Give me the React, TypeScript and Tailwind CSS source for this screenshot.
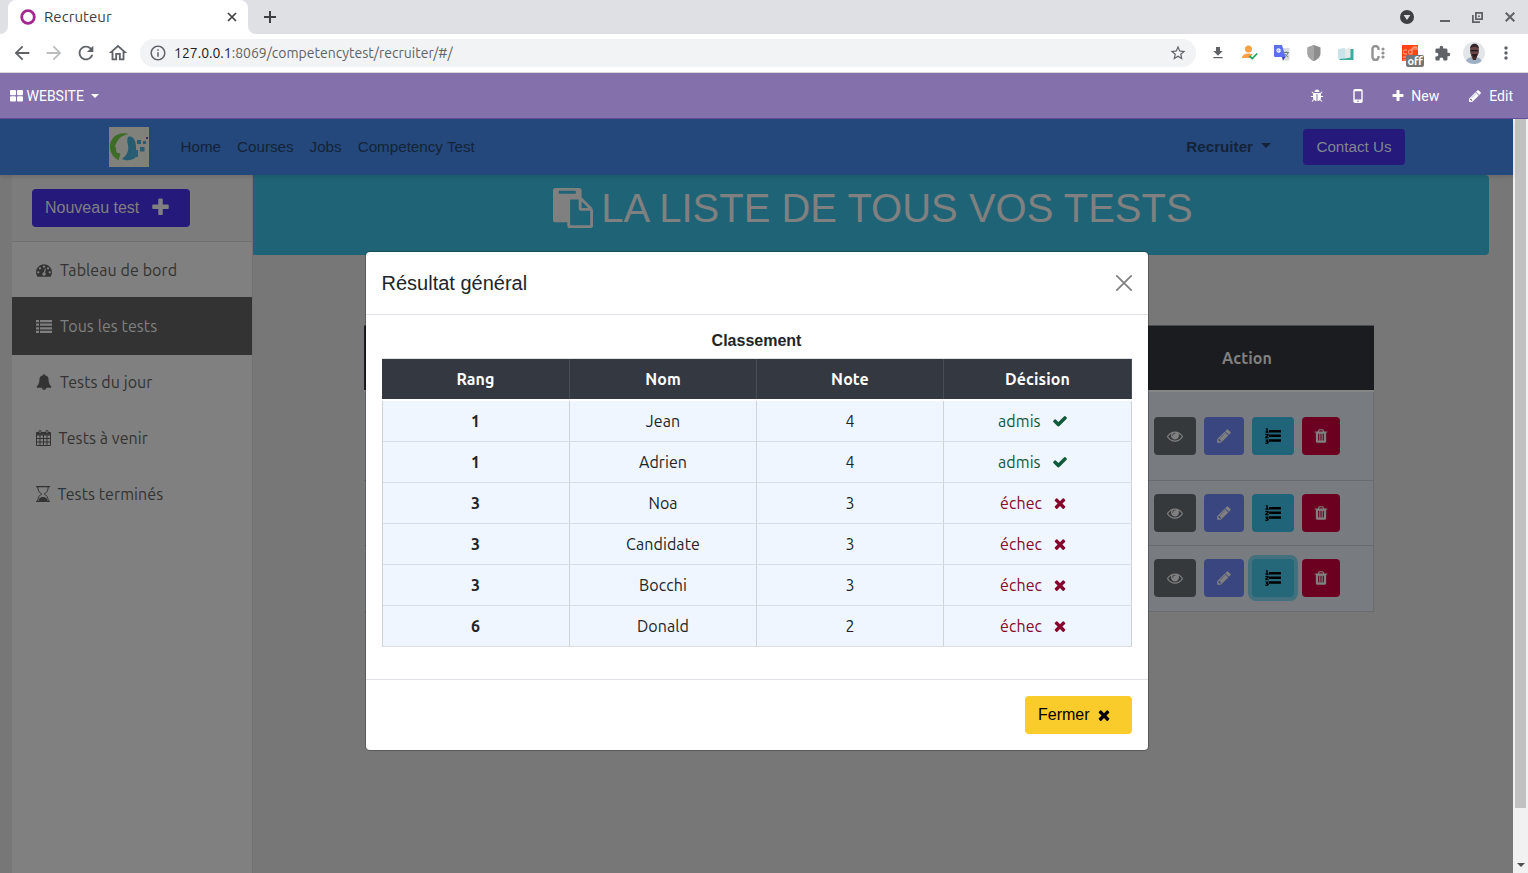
import React from "react";
import { FaListOl } from "react-icons/fa";
import { MdExtension, MdStarBorder, MdOutlineInfo, MdArrowBack, MdArrowForward, MdRefresh, MdOutlineHome, MdFileDownload, MdMoreVert } from "react-icons/md";

const glyphs = {
  eye: "M1664 960q-152-236-381-353 61 104 61 225 0 185-131.5 316.5t-316.5 131.5-316.5-131.5-131.5-316.5q0-121 61-225-229 117-381 353 133 205 333.5 326.5t434.5 121.5 434.5-121.5 333.5-326.5zm-720-384q0-20-14-34t-34-14q-125 0-214.5 89.5t-89.5 214.5q0 20 14 34t34 14 34-14 14-34q0-86 61-147t147-61q20 0 34-14t14-34zm848 384q0 34-20 69-140 230-376.5 368.5t-499.5 138.500-499.5-139-376.5-368q-20-35-20-69t20-69q140-229 376.5-368t499.5-139 499.5 139 376.5 368q20 35 20 69z",
  pencil: "M491 1536l91-91-235-235-91 91v107h128v128h107zm523-928q0-22-22-22-10 0-17 7l-542 542q-7 7-7 17 0 22 22 22 10 0 17-7l542-542q7-7 7-17zm-54-192l416 416-832 832h-416v-416zm683 96q0 53-37 90l-166 166-416-416 166-165q36-38 90-38 53 0 91 38l235 234q37 39 37 91z",
  check: "M1671 566q0 40-28 68l-724 724-136 136q-28 28-68 28t-68-28l-136-136-362-362q-28-28-28-68t28-68l136-136q28-28 68-28t68 28l294 295 656-657q28-28 68-28t68 28l136 136q28 28 28 68z",
  times: "M1490 1322q0 40-28 68l-136 136q-28 28-68 28t-68-28l-294-294-294 294q-28 28-68 28t-68-28l-136-136q-28-28-28-68t28-68l294-294-294-294q-28-28-28-68t28-68l136-136q28-28 68-28t68 28l294 294 294-294q28-28 68-28t68 28l136 136q28 28 28 68t-28 68l-294 294 294 294q28 28 28 68z",
  plus: "M1600 736v192q0 40-28 68t-68 28h-416v416q0 40-28 68t-68 28h-192q-40 0-68-28t-28-68v-416h-416q-40 0-68-28t-28-68v-192q0-40 28-68t68-28h416v-416q0-40 28-68t68-28h192q40 0 68 28t28 68v416h416q40 0 68 28t28 68z",
  trash: "M704 1376v-704q0-14-9-23t-23-9h-64q-14 0-23 9t-9 23v704q0 14 9 23t23 9h64q14 0 23-9t9-23zm256 0v-704q0-14-9-23t-23-9h-64q-14 0-23 9t-9 23v704q0 14 9 23t23 9h64q14 0 23-9t9-23zm256 0v-704q0-14-9-23t-23-9h-64q-14 0-23 9t-9 23v704q0 14 9 23t23 9h64q14 0 23-9t9-23zm-544-992h448l-48-117q-7-9-17-11h-317q-10 2-17 11zm928 32v64q0 14-9 23t-23 9h-96v948q0 83-47 143.500t-113 60.500h-832q-66 0-113-58.500t-47-141.500v-952h-96q-14 0-23-9t-9-23v-64q0-14 9-23t23-9h309l70-167q15-37 54-63t79-26h320q40 0 79 26t54 63l70 167h309q14 0 23 9t9 23z",
  bell: "M912 1696q0-16-16-16-59 0-101.500-42.500t-42.500-101.500q0-16-16-16t-16 16q0 73 51.500 124.500t124.500 51.500q16 0 16-16zm816-288q0 52-38 90t-90 38h-448q0 106-75 181t-181 75-181-75-75-181h-448q-52 0-90-38t-38-90q50-42 91-88t85-119.500 74.500-158.500 50-206 19.500-260q0-152 117-282.500t307-158.500q-8-19-8-39 0-40 28-68t68-28 68 28 28 68q0 20-8 39 190 28 307 158.500t117 282.500q0 139 19.500 260t50 206 74.500 158.500 85 119.500 91 88z",
  gauge: "M384 1152q0-53-37.500-90.500t-90.500-37.500-90.500 37.500-37.500 90.500 37.500 90.500 90.500 37.500 90.500-37.500 37.500-90.500zm192-448q0-53-37.500-90.500t-90.500-37.500-90.500 37.500-37.500 90.500 37.500 90.500 90.500 37.500 90.500-37.500 37.500-90.500zm428 481l101-382q6-26-7.500-48.500t-38.500-29.500-48 6.500-30 39.500l-101 382q-60 5-107 43.500t-63 98.500q-20 77 20 146t117 89 146-20 89-117q16-60-6-117t-72-91zm660-33q0-53-37.500-90.500t-90.500-37.500-90.500 37.500-37.500 90.500 37.500 90.500 90.500 37.500 90.500-37.500 37.500-90.500zm-640-640q0-53-37.500-90.500t-90.500-37.500-90.500 37.500-37.500 90.500 37.500 90.500 90.500 37.500 90.500-37.500 37.500-90.500zm448 192q0-53-37.500-90.500t-90.500-37.500-90.500 37.500-37.500 90.500 37.500 90.500 90.500 37.500 90.500-37.500 37.500-90.500zm320 448q0 261-141 483-19 29-54 29h-1402q-35 0-54-29-141-221-141-483 0-182 71-348t191-286 286-191 348-71 348 71 286 191 191 286 71 348z",
  paste: "M768 1664h896v-640h-416q-40 0-68-28t-28-68v-416h-384v1152zm256-1440v-64q0-13-9.500-22.500t-22.500-9.500h-704q-13 0-22.500 9.500t-9.500 22.500v64q0 13 9.500 22.500t22.500 9.500h704q13 0 22.500-9.500t9.500-22.500zm256 672h299l-299-299v299zm512 128v672q0 40-28 68t-68 28h-960q-40 0-68-28t-28-68v-160h-544q-40 0-68-28t-28-68v-1344q0-40 28-68t68-28h1088q40 0 68 28t28 68v328q21 13 36 28l408 408q28 28 48 76t20 88z",
  bug: "M1696 960q0 26-19 45t-45 19h-224q0 171-67 290l208 209q19 19 19 45t-19 45q-18 19-45 19t-45-19l-198-197q-5 5-15 13t-42 28.500-65 36.500-82 29-97 13v-896h-128v896q-51 0-101.500-13.500t-87-33-66-39-43.500-32.500l-15-14-183 207q-20 21-48 21-24 0-43-16-19-18-20.500-44.500t15.500-46.500l202-227q-58-114-58-274h-224q-26 0-45-19t-19-45 19-45 45-19h224v-294l-173-173q-19-19-19-45t19-45 45-19 45 19l173 173h844l173-173q19-19 45-19t45 19 19 45-19 45l-173 173v294h224q26 0 45 19t19 45zm-480-576h-640q0-133 93.500-226.500t226.500-93.500 226.500 93.500 93.500 226.500z",
};

function Glyph({ name, className = "" }: { name: keyof typeof glyphs; className?: string }) {
  return (
    <svg viewBox="0 0 1792 1792" fill="currentColor" className={`shrink-0 ${className}`}>
      <path d={glyphs[name]} />
    </svg>
  );
}

const ubuntu = "font-['Ubuntu','Noto_Sans',sans-serif]";

function BrowserChrome() {
  return (
    <div className={`shrink-0 ${ubuntu}`}>
      <div className="flex h-[34px] items-end bg-[#dee0e4] text-[#3c4043]">
        <div className="flex h-[34px] w-2 items-end bg-white">
          <div className="h-[34px] w-2 rounded-br-lg bg-[#dee0e4]" />
        </div>
        <div className="w-60 bg-[#dee0e4]">
          <div className="flex h-[34px] items-center rounded-t-lg bg-white pr-[11px] pl-3">
            <svg viewBox="0 0 16 16" className="size-4">
              <circle cx="8" cy="8" r="6.3" fill="none" stroke="#a3278f" strokeWidth="2.8" />
            </svg>
            <span className="ml-2 flex-1 text-[15px] tracking-[0.05px]">Recruteur</span>
            <svg viewBox="0 0 10 10" className="size-[10px]" stroke="#3c4043" strokeWidth="1.7">
              <path d="M1 1l8 8M9 1L1 9" />
            </svg>
          </div>
        </div>
        <div className="flex h-[34px] w-2 items-end bg-white">
          <div className="h-[34px] w-2 rounded-bl-lg bg-[#dee0e4]" />
        </div>
        <svg viewBox="0 0 12 12" className="mb-[11px] ml-2 size-3" stroke="#3c4043" strokeWidth="2">
          <path d="M6 0v12M0 6h12" />
        </svg>
        <div className="flex h-[34px] flex-1 items-center justify-end pr-[13px] text-[#5f6368]">
          <svg viewBox="0 0 14 14" className="mr-[26px] size-[14px]">
            <circle cx="7" cy="7" r="7" fill="#3c4043" />
            <path d="M3.600 5h6.800L7 10z" fill="#dee0e4" />
          </svg>
          <svg viewBox="0 0 10 10" className="mr-[22px] size-[10px]">
            <path d="M0 8h10v2H0z" fill="#5f6368" />
          </svg>
          <svg viewBox="0 0 11 11" className="mr-[22px] size-[11px]" fill="none" stroke="#5f6368" strokeWidth="1.8">
            <path d="M3.900.9h6.200v6.200H3.900zM.9 3v7.100H8M7 3.500v1.500" />
          </svg>
          <svg viewBox="0 0 10 10" className="size-[10px]" stroke="#5f6368" strokeWidth="2">
            <path d="M.7.7l8.600 8.600M9.300.7L.7 9.300" />
          </svg>
        </div>
      </div>
      <div className="flex h-[39px] items-center border-b border-[#d6d8dc] bg-white pl-[11px] text-[#5f6368]">
        <MdArrowBack className="size-[22px]" />
        <MdArrowForward className="ml-[10px] size-[22px] text-[#bbbdbf]" />
        <MdRefresh className="ml-[10px] size-[22px]" />
        <MdOutlineHome className="ml-[10px] size-[22px]" />
        <div className="ml-[11px] flex h-7 w-[1056px] items-center rounded-full bg-[#f1f3f4] pr-[9px] pl-[9px]">
          <MdOutlineInfo className="size-[18px]" />
          <span className="ml-[7px] flex-1 text-[14px]">
            <span className="text-[#202124]">127.0.0.1</span>:8069/competencytest/recruiter/#/
          </span>
          <MdStarBorder className="size-[18px]" />
        </div>
        <div className="flex flex-1 items-center">
          <MdFileDownload className="ml-[14px] size-4" />
          <svg viewBox="0 0 16 16" className="ml-[16px] size-4">
            <circle cx="6.500" cy="4" r="3.500" fill="#f9a042" />
            <path d="M0 13c0-3 3-4.500 6.500-4.500 1.500 0 3 .3 4 .8L8 13z" fill="#f9a042" />
            <path d="M7.500 10.800l2.700 2.700 5-5" fill="none" stroke="#14a35c" strokeWidth="1.700" />
          </svg>
          <svg viewBox="0 0 16 16" className="ml-[16px] size-4">
            <path d="M6 3h9.500v12.500H8z" fill="#dadce0" />
            <path d="M0 0h8l3.500 12H1a1 1 0 0 1-1-1z" fill="#5b6ff0" />
            <path d="M8 12h3.500L9 15.500z" fill="#3a3fc0" />
            <path d="M7.200 5H5v1.500h1a1.700 1.700 0 1 1-.2-2.200" fill="none" stroke="#fff" strokeWidth="1.100" />
            <path d="M9.800 7.500h5M12.300 6.500v1M14 7.500c-.4 2-1.500 3.500-3.500 4.500M11 9c.7 1.500 2 2.500 3.200 3" fill="none" stroke="#607d8b" />
          </svg>
          <svg viewBox="0 0 14 16" className="ml-[17px] h-4 w-[14px]">
            <path d="M7 0l6.500 2.500V8c0 4-3 6.500-6.500 8C3.500 14.500.5 12 .5 8V2.500z" fill="#8d8d8d" />
            <path d="M7 0v16C3.500 14.500.5 12 .5 8V2.500z" fill="#a5a5a5" />
          </svg>
          <svg viewBox="0 0 16 16" className="ml-[17px] size-4">
            <path d="M9 4h6.500v11H1z" fill="#38ada0" />
            <path d="M0 4l7-1v10.500L0 14z" fill="#c8e4e8" />
            <path d="M7 4.500L12.500 2v10.500L7 13.500z" fill="#e8eaea" />
          </svg>
          <svg viewBox="0 0 14 16" className="ml-[17px] h-4 w-[14px]">
            <path d="M7.500 5V4a3 3 0 0 0-6 0v8a3 3 0 0 0 6 0v-1" fill="none" stroke="#929292" strokeWidth="2.400" />
            <circle cx="12" cy="4" r="1.600" fill="#929292" /><circle cx="12" cy="8" r="1.600" fill="#929292" /><circle cx="12" cy="12" r="1.600" fill="#929292" />
          </svg>
          <div className="relative ml-[17px] size-4 bg-[#ff4612]">
            <svg viewBox="0 0 16 16" className="size-4" fill="none" stroke="#ffb199">
              <path d="M5 5H3a1.500 1.500 0 0 0-1.500 1.500v1A1.500 1.500 0 0 0 3 9h2M10 3v6H8a1.500 1.500 0 0 1-1.500-1.500v-1A1.500 1.500 0 0 1 8 5h2M11 5V2h4v3M13 2v3M1 12h3M1 15h3" />
            </svg>
            <span className="absolute top-[10px] left-1 flex h-3 w-[18px] items-center justify-center rounded-[2px] bg-[#757575] text-[11px] leading-none font-bold tracking-[-0.200px] text-white">off</span>
          </div>
          <MdExtension className="ml-[16px] size-[17px]" />
          <svg viewBox="0 0 22 22" className="ml-[12px] size-[22px]">
            <defs><clipPath id="avatar"><circle cx="11" cy="11" r="11" /></clipPath></defs>
            <g clipPath="url(#avatar)">
              <path d="M0 0h22v22H0z" fill="#e3e6e8" />
              <path d="M2 22c0-4 3-6 6-7h6c3 1 5 3 5 7z" fill="#9fb0c4" />
              <path d="M8 13h6l-1 5h-3z" fill="#4b2c2b" />
              <ellipse cx="11.500" cy="9" rx="4.500" ry="6.500" fill="#6a4446" />
              <path d="M7 7c0-7 9-7 9 0-2-3-7-3-9 0z" fill="#33232a" />
              <path d="M8 8h7v1.200H8z" fill="#1b1720" />
              <path d="M8.500 12h6l-1 3.500h-3z" fill="#2b1b21" />
            </g>
          </svg>
          <MdMoreVert className="ml-[11px] size-5" />
        </div>
      </div>
    </div>
  );
}

function WebsiteBar() {
  return (
    <div className="flex h-[46px] shrink-0 items-center border-b border-[#65509a] bg-[#8470ab] px-[10px] pr-[15px] font-[Roboto] text-[14px] text-white">
      <svg viewBox="0 0 13 12" className="h-[12px] w-[13px]" fill="currentColor">
        <rect width="6" height="5.300" rx="1" /><rect x="7" width="6" height="5.300" rx="1" />
        <rect y="6.300" width="6" height="5.300" rx="1" /><rect x="7" y="6.300" width="6" height="5.300" rx="1" />
      </svg>
      <span className="mt-[2px] ml-[3.500px]">WEBSITE</span>
      <span className="ml-[7px] border-x-4 border-t-4 border-x-transparent" />
      <div className="flex flex-1 items-center justify-end">
        <Glyph name="bug" className="size-[14px]" />
        <svg viewBox="0 0 10 14" className="ml-[29px] h-[14px] w-[10px]">
          <path fillRule="evenodd" fill="currentColor" d="M2 0h6a1.700 1.700 0 0 1 1.700 1.700v10.600A1.700 1.700 0 0 1 8 14H2A1.700 1.700 0 0 1 .3 12.300V1.700A1.700 1.700 0 0 1 2 0zM1.700 2.200v8.300h6.600V2.200zM5 11.400a.8.800 0 1 0 0 1.600.8.800 0 0 0 0-1.600z" />
        </svg>
        <Glyph name="plus" className="ml-[28px] size-[14px]" />
        <span className="mt-[2px] ml-[6px]">New</span>
        <Glyph name="pencil" className="ml-[29px] size-[14px]" />
        <span className="mt-[2px] ml-[7px]">Edit</span>
      </div>
    </div>
  );
}

function SiteNav() {
  return (
    <nav className="relative z-10 flex h-14 shrink-0 items-center bg-[#24487b] pl-[109px] font-['Liberation_Sans',sans-serif] text-[15.2px] text-[#142337] shadow-[0_2px_4px_rgba(0,0,0,0.12)]">
      <svg viewBox="0 0 40 40" className="mr-[31.500px] size-10">
        <path d="M0 0h40v40H0z" fill="#80817b" />
        <path d="M20 7C8 4 0 12 1 21c1 7 5 11 9 12 0-4 2-4 1-7-4 1-4-2-4-5l-1-2c3-6 4-10 14-12z" fill="#3c6c26" />
        <path d="M19 10c5-2 8 4 8 10v10c-4 4-10 4-14 2 5-4 7-8 6-14-1-3-1-6 0-8z" fill="#275b70" />
        <path d="M22 23h7v7h-7zM28 13h4v4h-4zM31 20h4.500v4.500H31zM34 14h3v3h-3z" fill="#285d73" />
        <path d="M37 10h2v2h-2z" fill="#203b66" />
      </svg>
      <div className="flex gap-[16px]">
        <span>Home</span><span>Courses</span><span>Jobs</span><span>Competency Test</span>
      </div>
      <div className="flex flex-1 items-center justify-end pr-[108px]">
        <span className="font-bold">Recruiter</span>
        <span className="mr-[32px] mb-[3px] ml-[8px] border-x-[5px] border-t-[5px] border-x-transparent border-t-[#142337]" />
        <button className="h-9 w-[102px] rounded-[4px] bg-[#25197c] text-[15.2px] text-[#80868e]">Contact Us</button>
      </div>
    </nav>
  );
}

const menuRow = "flex items-center pl-6 text-[16px] tracking-[0.08px]";

function Sidebar() {
  return (
    <aside className={`w-[241px] shrink-0 border-r border-[#727272] bg-[#808080] text-[#323332] ${ubuntu}`}>
      <div className="h-[67px] border-b border-[#6f6f6f] bg-[#7c7c7c] pt-[14px] pl-5">
        <button className="flex h-[38px] w-[158px] items-center rounded-[4px] bg-[#25197c] pl-[13px] font-['Liberation_Sans',sans-serif] text-[16px] text-[#808080]">
          Nouveau test
          <Glyph name="plus" className="mb-px ml-[11px] size-[21px]" />
        </button>
      </div>
      <div className={`${menuRow} h-[55px]`}>
        <Glyph name="gauge" className="size-4" />
        <span className="ml-2">Tableau de bord</span>
      </div>
      <div className={`${menuRow} h-[58px] bg-[#323332] text-[#808080]`}>
        <svg viewBox="0 0 16 13" className="h-[13px] w-4" fill="currentColor">
          <path d="M0 0h3v2.200H0zM4 0h12v2.200H4zM0 3.600h3v2.200H0zM4 3.600h12v2.200H4zM0 7.200h3v2.200H0zM4 7.200h12v2.200H4zM0 10.800h3V13H0zM4 10.800h12V13H4z" />
        </svg>
        <span className="ml-2">Tous les tests</span>
      </div>
      <div className={`${menuRow} mb-px h-[54px]`}>
        <Glyph name="bell" className="size-4" />
        <span className="ml-2">Tests du jour</span>
      </div>
      <div className={`${menuRow} h-14`}>
        <svg viewBox="0 0 15 16" className="h-4 w-[15px]" fill="none" stroke="currentColor">
          <path d="M.5 2.500h14v13H.5zM.5 5h14M.5 8.500h14M.5 12h14M4 5v10.500M7.500 5v10.500M11 5v10.500" strokeWidth="1" />
          <path d="M1 3.500h13" strokeWidth="2.500" />
          <rect x="3" y=".5" width="2" height="3" rx=".8" fill="#808080" /><rect x="10" y=".5" width="2" height="3" rx=".8" fill="#808080" />
        </svg>
        <span className="ml-[7.500px]">Tests à venir</span>
      </div>
      <div className={`${menuRow} h-14`}>
        <svg viewBox="0 0 14 16" className="h-4 w-[14px]" fill="none" stroke="currentColor">
          <path d="M0 .6h14M0 15.400h14" strokeWidth="1.200" />
          <path d="M1.800 1c0 4 2 6 4 7-2 1-4 3-4 7M12.200 1c0 4-2 6-4 7 2 1 4 3 4 7" />
          <path d="M3 13c1-1.500 2.500-2 4-2s3 .5 4 2v2H3z" fill="currentColor" stroke="none" />
        </svg>
        <span className="ml-[7.500px]">Tests terminés</span>
      </div>
    </aside>
  );
}

const actionButton = "flex h-[38px] items-center justify-center rounded-[4px] text-[#808080]";

function NumberedList() {
  return (
    <span className="flex items-center text-black">
      <span className="w-[4.500px] overflow-hidden"><FaListOl preserveAspectRatio="none" className="h-[18px] w-[22px]" /></span>
      <svg viewBox="0 0 12 12" className="h-3 w-3" fill="currentColor"><path d="M0 0h12v2.500H0zM0 4.600h12v2.500H0zM0 9.200h12v2.500H0z" /></svg>
    </span>
  );
}

function TestRow({ height, focused = false }: { height: string; focused?: boolean }) {
  return (
    <div className={`flex items-center justify-end gap-2 border-r border-b border-[#696c6f] bg-[#787c80] pr-[33px] ${height}`}>
      <button className={`${actionButton} w-[42px] bg-[#36393c]`}><Glyph name="eye" className="size-4" /></button>
      <button className={`${actionButton} w-10 bg-[#394680]`}><Glyph name="pencil" className="size-4" /></button>
      <button className={`${actionButton} w-[42px] ${focused ? "bg-[#24687a] shadow-[0_0_0_4px_#42707c]" : "bg-[#1f6478]"}`}><NumberedList /></button>
      <button className={`${actionButton} w-[38px] bg-[#6b0021]`}><Glyph name="trash" className="size-4" /></button>
    </div>
  );
}

function TestsPage() {
  return (
    <main className="flex-1 pr-6">
      <header className="flex h-20 justify-center rounded-r-[4px] bg-[#1f6476] pt-[12px] font-['Liberation_Sans',sans-serif] text-[40px] leading-[42px] text-[#808080]">
        <Glyph name="paste" className="mt-px mr-[8.500px] ml-[3.500px] size-10" />
        <h1>LA LISTE DE TOUS VOS TESTS</h1>
      </header>
      <section className={`mt-[70px] ml-[111px] w-[1010px] ${ubuntu}`}>
        <div className="flex h-[65px] items-center justify-end border-t border-[#4a4c4f] bg-[#1b1c20] pr-[102px] text-[16px] font-bold text-[#808080]">
          <span className="tracking-[0.1px]">Action</span>
        </div>
        <div className="h-[2px] bg-[#858585]" />
        <TestRow height="h-[89px]" />
        <TestRow height="h-[65px]" />
        <TestRow height="h-[66px] pb-[2px]" focused />
      </section>
    </main>
  );
}

const results = [
  { rank: 1, name: "Jean", score: 4 },
  { rank: 1, name: "Adrien", score: 4 },
  { rank: 3, name: "Noa", score: 3 },
  { rank: 3, name: "Candidate", score: 3 },
  { rank: 3, name: "Bocchi", score: 3 },
  { rank: 6, name: "Donald", score: 2 },
];

const cell = "flex items-center justify-center border-r border-[#cfd3d8]";
const columns = "grid grid-cols-[188px_187px_187px_188px]";

function ResultsDialog() {
  return (
    <div role="dialog" className="absolute top-[252px] left-[366px] z-20 flex h-[498px] w-[782px] flex-col rounded-[4px] bg-white font-['Liberation_Sans',sans-serif] text-[#212529] shadow-[0_0_0_1px_rgba(0,0,0,0.25)]">
      <div className="flex h-[63px] items-center justify-between border-b border-[#dee2e6] pr-4 pl-[15.500px]">
        <h2 className="text-[20px]">Résultat général</h2>
        <svg viewBox="0 0 16 16" className="size-4" stroke="#808080" strokeWidth="1.700" strokeLinecap="round">
          <path d="M.8.8l14.400 14.400M15.200.8L.8 15.200" />
        </svg>
      </div>
      <div className="h-[364px] px-4 pt-[14px]">
        <h3 className="h-[29px] pr-px text-center text-[16px] leading-6 font-bold">Classement</h3>
        <div className={`text-[16px] tracking-[0.08px] ${ubuntu}`}>
          <div className={`${columns} h-[41px] border-t border-[#dee2e6] bg-[#343840] font-bold text-white`}>
            {["Rang", "Nom", "Note", "Décision"].map((label) => (
              <div key={label} className="flex items-center justify-center border-r border-[#454d55]">{label}</div>
            ))}
          </div>
          <div className="mt-[2px] border-l border-[#cfd3d8]">
            {results.map((r) => (
              <div key={r.name} className="grid h-[41px] grid-cols-[187px_187px_187px_188px] border-b border-[#d9dde3] bg-[#eff6ff]">
                <div className={`${cell} pr-px font-bold`}>{r.rank}</div>
                <div className={cell}>{r.name}</div>
                <div className={cell}>{r.score}</div>
                {r.score > 3 ? (
                  <div className={`${cell} pr-[9px] text-[#11593a]`}>
                    <span className="w-[43px]">admis</span>
                    <Glyph name="check" className="ml-[11px] size-4" />
                  </div>
                ) : (
                  <div className={`${cell} pr-[7px] text-[#86082c]`}>
                    <span className="w-[42px]">échec</span>
                    <Glyph name="times" className="ml-[10px] size-4" />
                  </div>
                )}
              </div>
            ))}
          </div>
        </div>
      </div>
      <div className="flex flex-1 items-center justify-end border-t border-[#dee2e6] pr-4">
        <button className="flex h-[38px] w-[107px] items-center rounded-[4px] bg-[#f9cb2b] pl-[13px] text-[16px] text-black">
          Fermer
          <Glyph name="times" className="mb-px ml-[6px] size-4" />
        </button>
      </div>
    </div>
  );
}

export default function App() {
  return (
    <div className="relative flex h-[873px] w-[1528px] flex-col overflow-hidden bg-[#777777]">
      <BrowserChrome />
      <WebsiteBar />
      <div className="flex min-h-0 flex-1">
        <div className="flex min-w-0 flex-1 flex-col">
          <SiteNav />
          <div className="flex flex-1 pl-3">
            <Sidebar />
            <TestsPage />
          </div>
        </div>
        <div className="flex w-[15px] flex-col items-center bg-[#f1f1f1]">
          <div className="h-[689px] w-[11px] bg-[#c1c1c1]" />
          <span className="mt-auto mb-[6px] border-x-[4px] border-t-[4px] border-x-transparent border-t-[#505050]" />
        </div>
      </div>
      <ResultsDialog />
    </div>
  );
}
